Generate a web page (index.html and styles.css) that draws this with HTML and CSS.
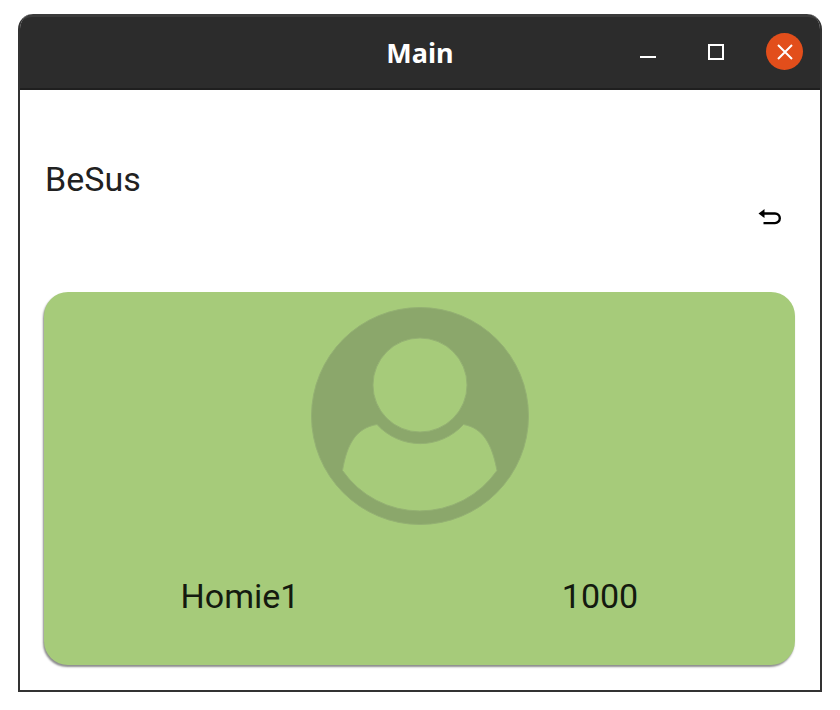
FILE: index.html
```html
<!DOCTYPE html>
<html lang="en">
<head>
<meta charset="utf-8">
<title>Main</title>
<link rel="stylesheet" href="styles.css">
</head>
<body>
<div class="window">
  <header class="titlebar">
    <div class="title">Main</div>
    <div class="controls">
      <span class="minimize"></span>
      <span class="maximize"></span>
      <span class="close">
        <svg width="20" height="20" viewBox="0 0 20 20"><path d="M3 3L17 17M17 3L3 17" stroke="#fff" stroke-width="2" fill="none"/></svg>
      </span>
    </div>
  </header>
  <main class="content">
    <h1 class="brand">BeSus</h1>
    <div class="toolbar">
      <svg class="back" width="24" height="20" viewBox="0 0 24 20"><path d="M3 6.500H17A4.800 4.800 0 0 1 17 16.100H5.500" stroke="#000" stroke-width="2.400" fill="none"/><path d="M0.500 6.500L6.500 2V11Z" fill="#000"/></svg>
    </div>
    <section class="card">
      <svg class="avatar" width="218" height="218" viewBox="0 0 218 218">
        <path fill="#8ba76b" stroke="#94b173" stroke-width="1" fill-rule="evenodd" d="M109 0.500A108.500 108.500 0 1 1 109 217.500A108.500 108.500 0 1 1 109 0.500ZM109 31A47 47 0 1 0 109 125A47 47 0 1 0 109 31ZM66 117.500C45 121 36 137 31.500 163.500A94 94 0 0 0 186 163.500C181 137 172 121 152.500 117.500A58.500 58.500 0 0 1 66 117.500Z"/>
      </svg>
      <div class="stats">
        <span class="stat">Homie1</span>
        <span class="stat">1000</span>
      </div>
    </section>
  </main>
</div>
</body>
</html>
```
FILE: styles.css
```css
* { box-sizing: border-box; }
html, body { margin: 0; background: #fff; }
body { padding: 14px 18px 0; font-family: Roboto, sans-serif; }
.window {
  width: 804px;
  height: 678px;
  border: 2px solid #333;
  border-top: 0;
  border-radius: 15px 15px 0 0;
  overflow: hidden;
  background: #fff;
}
.titlebar {
  height: 76px;
  margin: 0 -2px;
  display: flex;
  align-items: center;
  justify-content: center;
  position: relative;
  background: #2c2c2c;
  border-top: 3px solid #3b3b3b;
  border-bottom: 2px solid #1f1f1f;
  border-radius: 15px 15px 0 0;
}
.title {
  color: #fff;
  font-family: "Noto Sans", sans-serif;
  font-weight: 700;
  font-size: 27px;
  line-height: 32px;
}
.controls {
  position: absolute;
  right: 19px;
  top: 16px;
  display: flex;
  align-items: center;
}
.minimize {
  width: 16px;
  height: 2px;
  background: #fff;
  margin-top: 10px;
  margin-right: 52px;
  align-self: center;
}
.maximize {
  width: 16px;
  height: 16px;
  border: 2px solid #fff;
  margin-right: 42px;
}
.close {
  width: 37px;
  height: 37px;
  border-radius: 50%;
  background: #e24e1b;
  display: flex;
  align-items: center;
  justify-content: center;
}
.content { padding: 0 25px 0 24px; }
.brand {
  margin: 69px 0 0 1px;
  font-weight: 400;
  font-size: 34px;
  line-height: 40px;
  color: #212121;
}
.toolbar {
  display: flex;
  justify-content: flex-end;
  padding-right: 13px;
  margin-top: 8px;
}
.back { display: block; }
.card {
  margin-top: 65px;
  width: 751px;
  height: 373px;
  border-radius: 24px;
  background: #a6cb7a;
  box-shadow: -1px 2px 2px rgba(0, 0, 0, 0.45);
  display: flex;
  flex-direction: column;
  align-items: center;
  padding: 15px 15px 0;
}
.avatar { display: block; flex: none; }
.stats {
  width: 721px;
  margin-top: 51px;
  padding-left: 1px;
  display: grid;
  grid-template-columns: 1fr 1fr;
}
.stat {
  text-align: center;
  font-size: 34px;
  line-height: 40px;
  color: #141a0f;
}
```
